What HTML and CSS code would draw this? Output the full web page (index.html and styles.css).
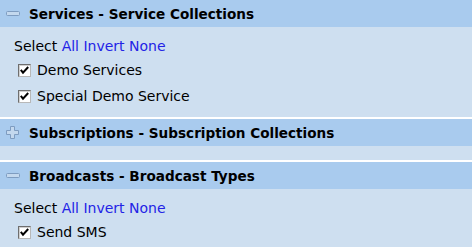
FILE: index.html
```html
<!DOCTYPE html>
<html lang="en">
<head>
    <meta charset="UTF-8" />
    <title>Collections</title>
    <link rel="stylesheet" href="styles.css">
</head>
<body>

    <!-- Services -->
    <div class="panel">
        <div class="panel-head">
            <svg class="toggle" width="14" height="14" viewBox="0 0 14 14"><rect x="0.5" y="4.5" width="13" height="4" rx="1" fill="#c3d8ee" stroke="#7e9cc0"/></svg>
            <span>Services - Service Collections</span>
        </div>
        <div class="panel-body">
            <div class="select-row">Select <a href="#">All</a> <a href="#">Invert</a> <a href="#">None</a></div>
            <label class="item"><span class="check"><svg width="11" height="11" viewBox="0 0 11 11"><path d="M1.8 4.8 L4 7.6 L9.2 2" fill="none" stroke="#000" stroke-width="2"/></svg></span>Demo Services</label>
            <label class="item"><span class="check"><svg width="11" height="11" viewBox="0 0 11 11"><path d="M1.8 4.8 L4 7.6 L9.2 2" fill="none" stroke="#000" stroke-width="2"/></svg></span>Special Demo Service</label>
        </div>
    </div>

    <!-- Subscriptions -->
    <div class="panel">
        <div class="panel-head">
            <svg class="toggle" width="14" height="14" viewBox="0 0 14 14"><path d="M4.5 0.5 H8.5 V4.5 H12.5 V8.5 H8.5 V12.5 H4.5 V8.5 H0.5 V4.5 H4.5 Z" fill="#c3d8ee" stroke="#7e9cc0"/></svg>
            <span>Subscriptions - Subscription Collections</span>
        </div>
        <div class="panel-body empty"></div>
    </div>

    <!-- Broadcasts -->
    <div class="panel">
        <div class="panel-head">
            <svg class="toggle" width="14" height="14" viewBox="0 0 14 14"><rect x="0.5" y="4.5" width="13" height="4" rx="1" fill="#c3d8ee" stroke="#7e9cc0"/></svg>
            <span>Broadcasts - Broadcast Types</span>
        </div>
        <div class="panel-body">
            <div class="select-row">Select <a href="#">All</a> <a href="#">Invert</a> <a href="#">None</a></div>
            <label class="item"><span class="check"><svg width="11" height="11" viewBox="0 0 11 11"><path d="M1.8 4.8 L4 7.6 L9.2 2" fill="none" stroke="#000" stroke-width="2"/></svg></span>Send SMS</label>
        </div>
    </div>

</body>
</html>
```

FILE: styles.css
```css
body {
    margin: 0;
    font-family: "DejaVu Sans", Verdana, sans-serif;
    font-size: 14px;
    color: #000;
    background: #fff;
}
.panel {
    margin-bottom: 2px;
}
.panel-head {
    display: flex;
    align-items: center;
    height: 27px;
    padding-left: 6px;
    background-color: #a9cbee;
    font-weight: bold;
    font-size: 13.6px;
    color: #000;
}
.toggle {
    display: block;
    margin-right: 9px;
}
.panel-body {
    background-color: #cedff0;
    padding: 10px 0 8px 14px;
}
.panel-body.empty {
    padding: 0;
    height: 14px;
}
.select-row {
    height: 18px;
    line-height: 18px;
    margin-bottom: 2px;
}
.select-row a {
    color: #2323e6;
    text-decoration: none;
}
.item {
    display: flex;
    align-items: center;
    height: 26px;
    padding-left: 4px;
}
.check {
    display: flex;
    align-items: center;
    justify-content: center;
    box-sizing: border-box;
    width: 13px;
    height: 13px;
    margin-right: 6px;
    background: #fff;
    border: 1px solid;
    border-color: #6e6e6e #b8b8b8 #b8b8b8 #6e6e6e;
    box-shadow: inset 1px 1px 0 #d0d0d0;
}
```
